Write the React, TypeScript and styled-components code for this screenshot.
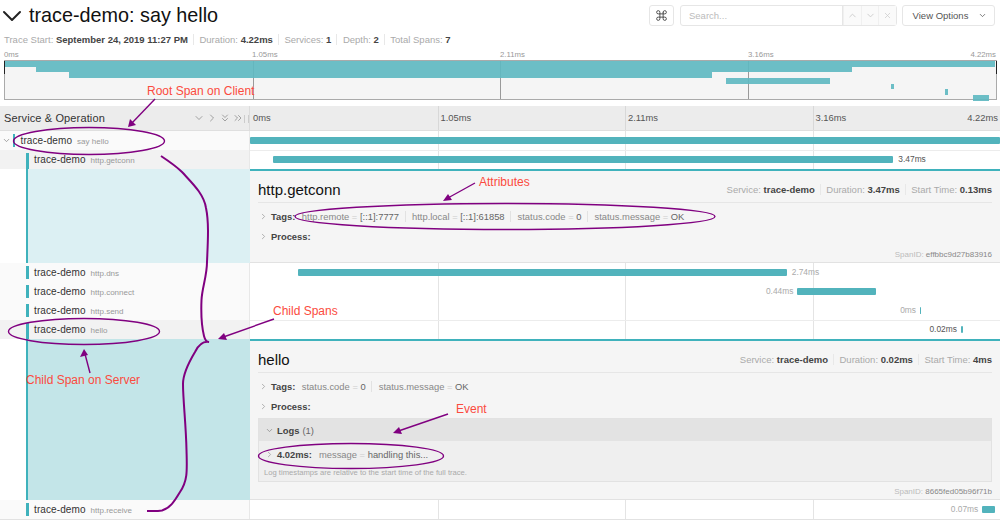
import React from "react";
import styled, { createGlobalStyle } from "styled-components";
import { ChevronDown, ChevronRight, ChevronUp, ChevronsDown, ChevronsRight, Command, X } from "lucide-react";

const TOTAL_MS = 4.22;
const TEAL = "#52b3bc";

const GlobalStyle = createGlobalStyle`
  html, body {
    margin: 0;
    padding: 0;
    background: #fff;
    font-family: "Liberation Sans", Arial, sans-serif;
    color: #333;
  }
`;

const Page = styled.div`
  position: relative;
  width: 1000px;
  height: 531px;
  overflow: hidden;
`;

const TitleBar = styled.div`
  height: 31px;
  display: flex;
  align-items: center;
  padding: 0 5px 0 0;
`;

const TitleChevron = styled(ChevronDown)`
  width: 32px;
  height: 32px;
  margin: 0 1px 0 -4px;
  color: #222;
  stroke-width: 1.5;
`;

const Title = styled.h1`
  margin: 0;
  font-size: 19.8px;
  font-weight: 400;
  color: #111;
  flex: 1;
`;

const Tool = styled.div<{ $w: number }>`
  width: ${(p) => p.$w}px;
  height: 21px;
  margin-bottom: 1px;
  box-sizing: border-box;
  border: 1px solid #e6e6e6;
  border-radius: 3px;
  display: flex;
  align-items: center;
  justify-content: center;
  color: #333;
  font-size: 9.5px;
`;

const CmdButton = styled(Tool)`
  margin-right: 6px;
`;

const SearchBox = styled.div`
  width: 217px;
  height: 21px;
  margin: 0 5px 1px 0;
  box-sizing: border-box;
  border: 1px solid #e6e6e6;
  border-radius: 3px;
  display: flex;
`;

const SearchInput = styled.div`
  width: 153px;
  padding-left: 8px;
  font-size: 9.5px;
  line-height: 19px;
  color: #bbb;
  border-right: 1px solid #e6e6e6;
`;

const SearchAction = styled.div`
  flex: 1;
  display: flex;
  align-items: center;
  justify-content: center;
  background: #fafafa;
  color: #ccc;
  border-left: 1px solid #f0f0f0;
`;

const ViewOptions = styled(Tool)`
  gap: 10px;
  padding-left: 3px;
  color: #555;
`;

const MetaRow = styled.div`
  height: 16px;
  display: flex;
  align-items: center;
  padding-left: 4px;
  font-size: 9.5px;
  color: #aaa;
`;

const MetaItem = styled.span`
  & + & {
    margin-left: 5px;
    padding-left: 5.5px;
    border-left: 1px solid #e8e8e8;
  }

  b {
    color: #444;
    font-weight: 700;
  }
`;

const MiniLabels = styled.div`
  height: 13px;
  display: grid;
  grid-template-columns: repeat(4, 1fr);
  align-items: end;
  padding: 0 4px;
  font-size: 7.8px;
  line-height: 10px;
  color: #999;
`;

const MiniLastLabels = styled.div`
  display: flex;
  justify-content: space-between;
`;

const Minimap = styled.div`
  position: relative;
  height: 40px;
  margin: 0 3.5px 0 4px;
  box-sizing: border-box;
  border: 1px solid #aaa;
  background: #f5f5f5;
`;

const MiniBar = styled.div<{ $row: number }>`
  position: absolute;
  top: ${(p) => p.$row * 5.65}px;
  height: 5.65px;
  background: #5fb8c1;
  opacity: 0.92;
`;

const MiniTick = styled.div`
  position: absolute;
  top: 0;
  bottom: 0;
  width: 1px;
  background: #9a9a9a;
`;

const MiniHandle = styled.div<{ $side: "left" | "right" }>`
  position: absolute;
  top: 0;
  ${(p) => p.$side}: -1px;
  width: 1px;
  height: 13px;
  background: #222;
`;

const Timeline = styled.div`
  margin-top: 6px;
  border-bottom: 1px solid #e2e2e2;
`;

const Row = styled.div`
  display: grid;
  grid-template-columns: 250px 1fr;
`;

const HeadLeft = styled.div`
  height: 24px;
  background: #ececec;
  border-bottom: 1px solid #dfdfdf;
  border-right: 1px solid #dcdcdc;
  box-sizing: content-box;
  display: flex;
  align-items: center;
  padding-left: 4px;
  font-size: 11px;
  letter-spacing: 0.13px;
  color: #333;
  width: 245px;
`;

const HeadTitle = styled.span`
  flex: 1;
`;

const HeadIcons = styled.span`
  display: flex;
  gap: 1px;
  color: #777;
`;

const Grip = styled.span`
  width: 3px;
  height: 8px;
  margin: 2px 0 0 0;
  border-left: 1px solid #ccc;
  border-right: 1px solid #ccc;
`;

const HeadRight = styled.div`
  position: relative;
  height: 24px;
  background: #ececec;
  border-bottom: 1px solid #dfdfdf;
  font-size: 9.4px;
  color: #555;
`;

const HeadTick = styled.span<{ $end?: boolean }>`
  position: absolute;
  top: 0;
  height: 24px;
  line-height: 24px;
  padding-left: 2px;
  border-left: 1px solid ${(p) => (p.$end ? "transparent" : "#d8d8d8")};
`;

const NameCell = styled.div<{ $active: boolean; $row: number }>`
  height: 19px;
  display: flex;
  align-items: center;
  padding-left: ${(p) => (p.$row === 0 ? 2 : 26)}px;
  background: ${(p) => (p.$active ? "#f2f2f2" : "#fafafa")};
  border-right: 1px solid #e8e8e8;
  box-sizing: border-box;
  font-size: 10px;
  color: #333;
  overflow: hidden;
`;

const SpanMark = styled.span<{ $active: boolean }>`
  width: 2.5px;
  height: ${(p) => (p.$active ? "16px" : "13px")};
  align-self: ${(p) => (p.$active ? "flex-end" : "center")};
  background: #3fb2bc;
  margin-right: 5.5px;
  flex: none;
`;

const Service = styled.span`
  letter-spacing: 0.1px;
`;

const Operation = styled.span`
  font-size: 8px;
  color: #999;
  margin-left: 5px;
  margin-top: 1px;
`;

const Track = styled.div`
  position: relative;
  height: 19px;
`;

const Tick = styled.div`
  position: absolute;
  top: 0;
  bottom: 0;
  width: 1px;
  background: #e4e4e4;
`;

const RowRule = styled.div`
  position: absolute;
  left: 0;
  right: 0;
  top: 0;
  height: 1px;
  background: #ececec;
`;

const Bar = styled.div`
  position: absolute;
  top: 6px;
  height: 6.5px;
  border-radius: 1px;
  background: ${TEAL};
`;

const BarLabel = styled.span<{ $before: boolean; $dark: boolean }>`
  position: absolute;
  top: -2px;
  ${(p) => (p.$before ? "right: calc(100% + 4px);" : "left: calc(100% + 5px);")}
  font-size: 8.4px;
  line-height: 11px;
  color: ${(p) => (p.$dark ? "#555" : "#aaa")};
`;

const Gutter = styled.div<{ $tint: string }>`
  margin-left: 26px;
  border-left: 2.5px solid #3fb2bc;
  background: ${(p) => p.$tint};
`;

const Detail = styled.div<{ $h: number }>`
  height: ${(p) => p.$h}px;
  box-sizing: border-box;
  border-top: 2px solid #3fb2bc;
  border-bottom: 1px solid #e2e2e2;
  background: #f5f5f5;
  padding: 0 8px;
  position: relative;
`;

const DetailHead = styled.div`
  height: 32px;
  box-sizing: border-box;
  padding-top: 6px;
  display: flex;
  align-items: center;
  border-bottom: 1px solid #e6e6e6;
`;

const DetailTitle = styled.h2`
  margin: 0;
  flex: 1;
  font-size: 15px;
  font-weight: 400;
  color: #111;
`;

const DetailMeta = styled.div`
  display: flex;
  font-size: 9.5px;
  color: #aaa;
`;

const Section = styled.div`
  height: 20px;
  display: flex;
  align-items: center;
  font-size: 9.4px;
  color: #888;
  white-space: nowrap;
`;

const FirstSection = styled(Section)`
  margin-top: 3px;
`;

const Toggle = styled(ChevronRight)`
  width: 9px;
  height: 9px;
  margin: 0 3.5px 0 0.5px;
  color: #999;
  flex: none;
`;

const SectionLabel = styled.b`
  color: #444;
  margin-right: 6.5px;
`;

const Pair = styled.span`
  & + & {
    margin-left: 5.5px;
    padding-left: 6.5px;
    border-left: 1px solid #e2e2e2;
  }

  i {
    font-style: normal;
    color: #ccc;
  }

  em {
    font-style: normal;
    color: #666;
  }
`;

const SpanIdLine = styled.div`
  position: absolute;
  right: 8px;
  bottom: 2.5px;
  font-size: 8px;
  line-height: 10px;
  color: #bbb;

  em {
    font-style: normal;
    color: #888;
  }
`;

const Logs = styled.div`
  margin-top: 2px;
  border: 1px solid #e2e2e2;
  background: #efefef;
  height: 64px;
  box-sizing: border-box;
`;

const LogsHead = styled.div`
  height: 22px;
  display: flex;
  align-items: center;
  background: #e3e3e3;
  padding-left: 6px;
  font-size: 9.4px;
  color: #666;

  b {
    color: #444;
    margin-right: 3px;
  }
`;

const LogsToggle = styled(ChevronDown)`
  width: 9px;
  height: 9px;
  color: #888;
  margin-right: 3px;
`;

const LogRow = styled.div`
  height: 27px;
  display: flex;
  align-items: center;
  padding-left: 5px;
  font-size: 9.4px;
  color: #888;

  b {
    color: #444;
    margin-right: 7px;
  }
`;

const LogNote = styled.div`
  padding-left: 5px;
  font-size: 7.65px;
  line-height: 9px;
  color: #aaa;
`;

const Overlay = styled.svg`
  position: absolute;
  left: 0;
  top: 0;
  width: 1000px;
  height: 531px;
  pointer-events: none;
`;

const Note = styled.span<{ $x: number; $y: number }>`
  position: absolute;
  left: ${(p) => p.$x}px;
  top: ${(p) => p.$y}px;
  font-size: 12px;
  line-height: 14px;
  color: #fb4b3e;
  white-space: nowrap;
`;

const ticks = [25, 50, 75];

const Ticks = () => (
  <>
    {ticks.map((t) => (
      <Tick key={t} style={{ left: `${t}%` }} />
    ))}
  </>
);

type SpanData = {
  op: string;
  start: number;
  dur: number;
  label: string;
  before?: boolean;
  active?: boolean;
  depth: number;
};

const SpanRow = ({ op, start, dur, label, before, active, depth }: SpanData) => (
  <Row>
    <NameCell $active={!!active} $row={depth}>
      {depth === 0 && <ChevronDown size={9} color="#888" style={{ marginRight: 1.5 }} />}
      <SpanMark $active={!!active && depth > 0} />
      <Service>trace-demo</Service>
      <Operation>{op}</Operation>
    </NameCell>
    <Track>
      <Ticks />
      {active && <RowRule />}
      <Bar style={{ left: `${(start / TOTAL_MS) * 100}%`, width: `max(1px, ${(dur / TOTAL_MS) * 100}%)` }}>
        {label && (
          <BarLabel $before={!!before} $dark={!!active}>
            {label}
          </BarLabel>
        )}
      </Bar>
    </Track>
  </Row>
);

const KeyValue = ({ k, v }: { k: string; v: string }) => (
  <Pair>
    {k} <i>=</i> <em>{v}</em>
  </Pair>
);

const DetailMetaLine = ({ dur, start }: { dur: string; start: string }) => (
  <DetailMeta>
    <MetaItem>
      Service: <b>trace-demo</b>
    </MetaItem>
    <MetaItem>
      Duration: <b>{dur}</b>
    </MetaItem>
    <MetaItem>
      Start Time: <b>{start}</b>
    </MetaItem>
  </DetailMeta>
);

const miniBars = [
  { from: 0, to: 990 },
  { from: 30.5, to: 847 },
  { from: 63.5, to: 707 },
  { from: 721, to: 825 },
  { from: 885.5, to: 889 },
  { from: 939.5, to: 943 },
  { from: 967.5, to: 984 },
];

const App = () => (
  <Page>
    <GlobalStyle />
    <TitleBar>
      <TitleChevron />
      <Title>trace-demo: say hello</Title>
      <CmdButton $w={25}>
        <Command size={13} strokeWidth={1.5} />
      </CmdButton>
      <SearchBox>
        <SearchInput>Search...</SearchInput>
        <SearchAction>
          <ChevronUp size={11} />
        </SearchAction>
        <SearchAction>
          <ChevronDown size={11} />
        </SearchAction>
        <SearchAction>
          <X size={9} />
        </SearchAction>
      </SearchBox>
      <ViewOptions $w={93}>
        View Options
        <ChevronDown size={9} />
      </ViewOptions>
    </TitleBar>

    <MetaRow>
      <MetaItem>
        Trace Start: <b>September 24, 2019 11:27 PM</b>
      </MetaItem>
      <MetaItem>
        Duration: <b>4.22ms</b>
      </MetaItem>
      <MetaItem>
        Services: <b>1</b>
      </MetaItem>
      <MetaItem>
        Depth: <b>2</b>
      </MetaItem>
      <MetaItem>
        Total Spans: <b>7</b>
      </MetaItem>
    </MetaRow>

    <MiniLabels>
      <span>0ms</span>
      <span>1.05ms</span>
      <span>2.11ms</span>
      <MiniLastLabels>
        <span>3.16ms</span>
        <span>4.22ms</span>
      </MiniLastLabels>
    </MiniLabels>
    <Minimap>
      {[247.5, 495, 742.5].map((x) => (
        <MiniTick key={x} style={{ left: x }} />
      ))}
      {miniBars.map((b, i) => (
        <MiniBar key={i} $row={i} style={{ left: b.from, width: b.to - b.from }} />
      ))}
      <MiniHandle $side="left" />
      <MiniHandle $side="right" />
    </Minimap>

    <Timeline>
      <Row>
        <HeadLeft>
          <HeadTitle>Service &amp; Operation</HeadTitle>
          <HeadIcons>
            <ChevronDown size={12} strokeWidth={1.3} />
            <ChevronRight size={12} strokeWidth={1.3} />
            <ChevronsDown size={12} strokeWidth={1.3} />
            <ChevronsRight size={12} strokeWidth={1.3} />
          </HeadIcons>
          <Grip />
        </HeadLeft>
        <HeadRight>
          <HeadTick $end style={{ left: 0 }}>0ms</HeadTick>
          <HeadTick style={{ left: "25%" }}>1.05ms</HeadTick>
          <HeadTick style={{ left: "50%" }}>2.11ms</HeadTick>
          <HeadTick style={{ left: "75%" }}>3.16ms</HeadTick>
          <HeadTick $end style={{ right: 2 }}>4.22ms</HeadTick>
        </HeadRight>
      </Row>

      <SpanRow op="say hello" start={0} dur={4.22} label="" depth={0} />
      <SpanRow op="http.getconn" start={0.13} dur={3.49} label="3.47ms" active depth={1} />

      <Row>
        <Gutter $tint="#dcf0f3" />
        <Detail $h={94}>
          <DetailHead>
            <DetailTitle>http.getconn</DetailTitle>
            <DetailMetaLine dur="3.47ms" start="0.13ms" />
          </DetailHead>
          <FirstSection>
            <Toggle />
            <SectionLabel>Tags:</SectionLabel>
            <KeyValue k="http.remote" v="[::1]:7777" />
            <KeyValue k="http.local" v="[::1]:61858" />
            <KeyValue k="status.code" v="0" />
            <KeyValue k="status.message" v="OK" />
          </FirstSection>
          <Section>
            <Toggle />
            <SectionLabel>Process:</SectionLabel>
          </Section>
          <SpanIdLine>
            SpanID: <em>effbbc9d27b83916</em>
          </SpanIdLine>
        </Detail>
      </Row>

      <SpanRow op="http.dns" start={0.27} dur={2.75} label="2.74ms" depth={1} />
      <SpanRow op="http.connect" start={3.08} dur={0.44} label="0.44ms" before depth={1} />
      <SpanRow op="http.send" start={3.77} dur={0} label="0ms" before depth={1} />
      <SpanRow op="hello" start={4.0} dur={0.01} label="0.02ms" before active depth={1} />

      <Row>
        <Gutter $tint="#c3e5e8" />
        <Detail $h={161}>
          <DetailHead>
            <DetailTitle>hello</DetailTitle>
            <DetailMetaLine dur="0.02ms" start="4ms" />
          </DetailHead>
          <FirstSection>
            <Toggle />
            <SectionLabel>Tags:</SectionLabel>
            <KeyValue k="status.code" v="0" />
            <KeyValue k="status.message" v="OK" />
          </FirstSection>
          <Section>
            <Toggle />
            <SectionLabel>Process:</SectionLabel>
          </Section>
          <Logs>
            <LogsHead>
              <LogsToggle />
              <b>Logs</b> (1)
            </LogsHead>
            <LogRow>
              <Toggle />
              <b>4.02ms:</b>
              <KeyValue k="message" v="handling this..." />
            </LogRow>
            <LogNote>Log timestamps are relative to the start time of the full trace.</LogNote>
          </Logs>
          <SpanIdLine>
            SpanID: <em>8665fed05b96f71b</em>
          </SpanIdLine>
        </Detail>
      </Row>

      <SpanRow op="http.receive" start={4.12} dur={0.07} label="0.07ms" before depth={1} />
    </Timeline>

    <Overlay viewBox="0 0 1000 531" fill="none" stroke="#800080" strokeWidth={1.4}>
      <ellipse cx={89} cy={141} rx={75.5} ry={13.5} />
      <ellipse cx={505} cy={216.5} rx={210} ry={13} />
      <ellipse cx={84} cy={331.5} rx={75.5} ry={13} />
      <ellipse cx={351} cy={456} rx={92.5} ry={12.5} />
      <path d="M155 99 L131 124" />
      <path d="M128 127 L130 119 L136 125 Z" fill="#800080" stroke="none" />
      <path d="M475 183 L447 198.5" />
      <path d="M443 201 L448 194 L452 200 Z" fill="#800080" stroke="none" />
      <path d="M274 319 L222 337.5" />
      <path d="M218 339 L224 333 L227 340 Z" fill="#800080" stroke="none" />
      <path d="M90 373 L85 354" />
      <path d="M84 349 L80 357 L88 355 Z" fill="#800080" stroke="none" />
      <path d="M448 414 L397 431.5" />
      <path d="M393 433 L399 427 L402 434 Z" fill="#800080" stroke="none" />
      <path
        d="M161 156 C170 162 178 168 182 172 C192 183 204 194 206 208 C209 222 208 240 207 262 C207 276 202 288 201.5 300 C201 312 202 328 204 336 C205 340 207 342 209 342 C203 341 198 346 195 352 C189 362 183 374 183 384 C183 400 186 425 186.5 450 C187 470 188 480 180 492 C174 502 170 508 162 510.5 C156 511.5 152 511 147 511"
        strokeWidth={2}
      />
    </Overlay>

    <Note $x={147} $y={84}>Root Span on Client</Note>
    <Note $x={479} $y={175}>Attributes</Note>
    <Note $x={273} $y={304}>Child Spans</Note>
    <Note $x={26} $y={373}>Child Span on Server</Note>
    <Note $x={456} $y={402}>Event</Note>
  </Page>
);

export default App;
